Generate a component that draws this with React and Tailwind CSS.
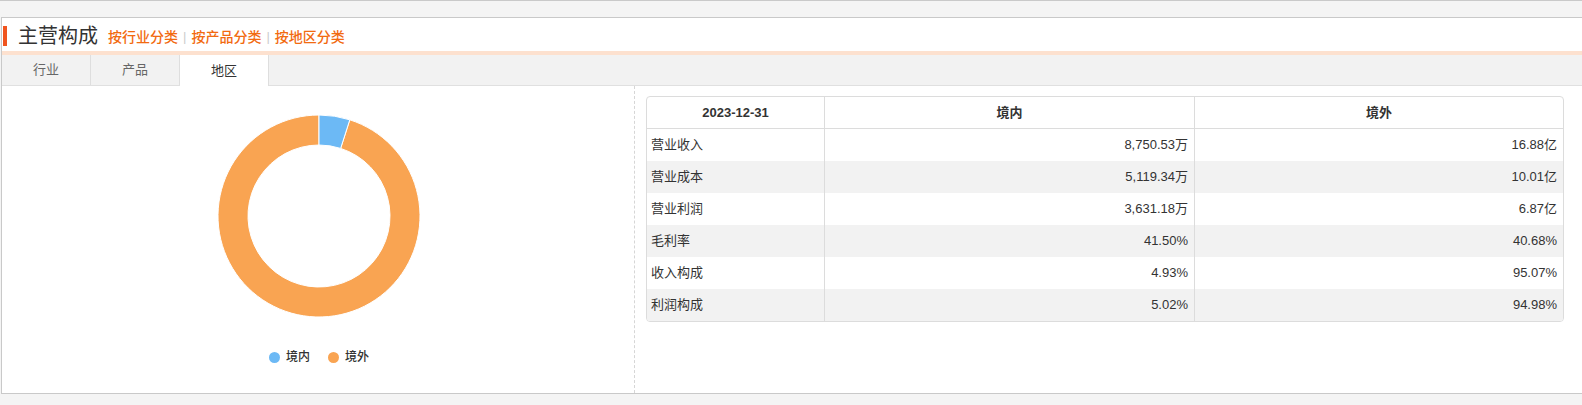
const rows = [
  ['营业收入', '8,750.53万', '16.88亿'],
  ['营业成本', '5,119.34万', '10.01亿'],
  ['营业利润', '3,631.18万', '6.87亿'],
  ['毛利率', '41.50%', '40.68%'],
  ['收入构成', '4.93%', '95.07%'],
  ['利润构成', '5.02%', '94.98%'],
];

function arcPath(cx, cy, r0, r1, a0, a1) {
  const p = (r, a) => [cx + r * Math.sin(a), cy - r * Math.cos(a)];
  const large = a1 - a0 > Math.PI ? 1 : 0;
  const [x1, y1] = p(r1, a0);
  const [x2, y2] = p(r1, a1);
  const [x3, y3] = p(r0, a1);
  const [x4, y4] = p(r0, a0);
  return `M${x1} ${y1}A${r1} ${r1} 0 ${large} 1 ${x2} ${y2}L${x3} ${y3}A${r0} ${r0} 0 ${large} 0 ${x4} ${y4}Z`;
}

function Donut() {
  const split = 0.0493 * Math.PI * 2;
  return (
    <svg width="210" height="210" viewBox="0 0 210 210">
      <path d={arcPath(105, 105, 71, 101, split, Math.PI * 2 - 0.0001)} fill="#f9a452" stroke="#fff" strokeWidth="1" />
      <path d={arcPath(105, 105, 71, 101, 0, split)} fill="#6cb9f5" stroke="#fff" strokeWidth="1" />
    </svg>
  );
}

export default function App() {
  return (
    <div className="w-[1582px] h-[405px] bg-[#f4f4f4] overflow-hidden" style={{ fontFamily: '"Liberation Sans", "Noto Sans CJK SC", sans-serif' }}>
      <div className="h-[17px] border-t border-[#c9c9c9]"></div>
      <div className="ml-px bg-white border-t border-l border-b border-[#c9c9c9] h-[377px] flex flex-col">
        {/* header */}
        <div className="h-[33px] flex items-center pt-[2px]">
          <div className="w-[4px] h-[20px] bg-[#f0541e] ml-px"></div>
          <span className="ml-[11px] text-[20px] text-[#333]">主营构成</span>
          <div className="ml-[10px] flex items-center text-[14px] font-medium text-[#f26a10] mt-[3px]">
            <span>按行业分类</span>
            <span className="text-[#ccc] font-normal mx-[5px] text-[13px]">|</span>
            <span>按产品分类</span>
            <span className="text-[#ccc] font-normal mx-[5px] text-[13px]">|</span>
            <span>按地区分类</span>
          </div>
        </div>
        <div className="h-[4px] bg-[#fde1cf]"></div>
        {/* tabs */}
        <div className="h-[31px] bg-[#f2f2f2] border-b border-[#e0e0e0] flex text-[13px] text-[#666]">
          {['行业', '产品', '地区'].map((t, i) => (
            <div key={t} className={`w-[89px] border-r border-[#dedede] flex items-center justify-center ${i === 2 ? 'bg-white text-[#333] h-[31px]' : ''}`}>{t}</div>
          ))}
        </div>
        {/* content */}
        <div className="flex flex-1">
          <div className="w-[633px] border-r border-dashed border-[#d6d6d6] flex flex-col items-center pt-[25px]">
            <div className="ml-[1px]"><Donut /></div>
            <div className="flex items-center gap-[18px] mt-[27px] text-[12px] text-[#333] font-medium ml-[2px]">
              <div className="flex items-center gap-[6px]"><span className="w-[11px] h-[11px] rounded-full bg-[#6cb9f5]"></span>境内</div>
              <div className="flex items-center gap-[6px]"><span className="w-[11px] h-[11px] rounded-full bg-[#f9a452]"></span>境外</div>
            </div>
          </div>
          <div className="flex-1 pl-[11px] pr-[18px] pt-[10px]">
            <div className="border border-[#dcdcdc] rounded-[4px] overflow-hidden text-[13px] text-[#333]">
              <div className="flex h-[32px] font-bold border-b border-[#dcdcdc]">
                <div className="w-[178px] border-r border-[#dcdcdc] flex items-center justify-center">2023-12-31</div>
                <div className="w-[370px] border-r border-[#dcdcdc] flex items-center justify-center">境内</div>
                <div className="flex-1 flex items-center justify-center">境外</div>
              </div>
              {rows.map((r, i) => (
                <div key={r[0]} className={`flex h-[32px] ${i % 2 === 1 ? 'bg-[#f2f2f2]' : 'bg-white'} ${i === rows.length - 1 ? 'h-[30px]' : ''}`}>
                  <div className="w-[178px] border-r border-[#dcdcdc] flex items-center pl-[4px]">{r[0]}</div>
                  <div className="w-[370px] border-r border-[#dcdcdc] flex items-center justify-end pr-[6px]">{r[1]}</div>
                  <div className="flex-1 flex items-center justify-end pr-[6px]">{r[2]}</div>
                </div>
              ))}
            </div>
          </div>
        </div>
      </div>
    </div>
  );
}
